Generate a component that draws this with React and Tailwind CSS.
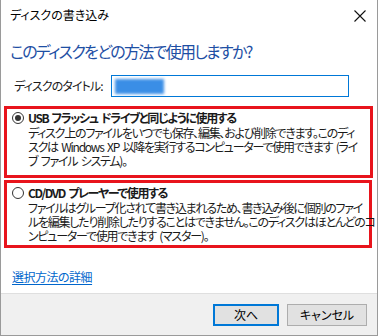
const font = { fontFamily: '"Noto Sans CJK JP", "Noto Sans", sans-serif' };

function Radio({ checked }) {
    return (
        <div className="w-[12px] h-[12px] rounded-full border border-[#333333] bg-white flex items-center justify-center shrink-0">
            {checked && <div className="w-[6px] h-[6px] rounded-full bg-[#333333]" />}
        </div>
    );
}

function Option({ checked, label, lines, height, labelTop }) {
    return (
        <div
            className={`ml-[3px] box-border border-[3px] border-[#e8141c] flex ${height}`}
        >
            <div className={`ml-[5px] ${labelTop}`}>
                <div className="h-[16px] flex items-center">
                    <Radio checked={checked} />
                </div>
            </div>
            <div className={`ml-[4px] ${labelTop} text-[12px] text-[#1a1a1a]`}>
                <div className="leading-[16px] font-bold whitespace-nowrap tracking-[-1.4px] [word-spacing:2px]">{label}</div>
                {lines.map((line) => (
                    <div key={line} className="leading-[14px] whitespace-nowrap tracking-[-1.25px] [word-spacing:2px]">
                        {line}
                    </div>
                ))}
            </div>
        </div>
    );
}

export default function App() {
    return (
        <div
            className="w-[378px] h-[336px] bg-white flex flex-col border-l border-r border-b border-[#9a9a9a] box-border [font-feature-settings:'palt'] overflow-hidden"
            style={font}
        >
            <div className="h-[30px] flex items-start justify-between pl-[9px] pr-[8px] pt-[7px]">
                <span className="text-[12px] leading-[16px] text-black">ディスクの書き込み</span>
                <svg width="12" height="12" viewBox="0 0 12 12" className="mt-[3px] mr-[3px]">
                    <path d="M0.5 0.5 L11.5 11.5 M11.5 0.5 L0.5 11.5" stroke="#111" strokeWidth="1.1" />
                </svg>
            </div>

            <div className="mt-[10px] pl-[9px] text-[16px] leading-[22px] text-[#1e4fa4] whitespace-nowrap tracking-[-1.7px]">
                このディスクをどの方法で使用しますか?
            </div>

            <div className="mt-[13px] flex items-center h-[22px]">
                <span className="pl-[13px] w-[110px] text-[12px] text-[#1a1a1a] leading-[16px] tracking-[-0.9px] whitespace-nowrap">
                    ディスクのタイトル:
                </span>
                <div className="w-[238px] h-[22px] border border-[#0078d7] box-border flex items-center pl-[3px]">
                    <div className="w-[49px] h-[15px] bg-[#3a8ee6] blur-[1.5px]" />
                </div>
            </div>

            <div className="mt-[9px] w-[372px]">
                <Option
                    checked
                    height="h-[72px]"
                    labelTop="pt-[1px]"
                    label="USB フラッシュ ドライブと同じように使用する"
                    lines={[
                        'ディスク上のファイルをいつでも保存、編集、および削除できます。このディ',
                        'スクは Windows XP 以降を実行するコンピューターで使用できます (ライ',
                        'ブ ファイル システム)。',
                    ]}
                />
            </div>
            <div className="mt-[2px] w-[371px]">
                <Option
                    checked={false}
                    height="h-[68px]"
                    labelTop="pt-[2px]"
                    label="CD/DVD プレーヤーで使用する"
                    lines={[
                        'ファイルはグループ化されて書き込まれるため、書き込み後に個別のファイ',
                        'ルを編集したり削除したりすることはできません。このディスクはほとんどのコ',
                        'ンピューターで使用できます (マスター)。',
                    ]}
                />
            </div>

            <div className="mt-[15px] pl-[11px]">
                <span className="text-[12px] leading-[16px] text-[#0066cc] underline underline-offset-2 tracking-[-0.5px]">
                    選択方法の詳細
                </span>
            </div>

            <div className="mt-auto h-[42px] bg-[#f0f0f0] border-t border-[#dfdfdf] flex justify-end items-start pt-[10px] pr-[10px] gap-[8px]">
                <button className="w-[66px] h-[22px] border-2 border-[#0078d7] bg-[#e1e1e1] text-[12px] leading-[16px] text-black flex items-center justify-center">
                    次へ
                </button>
                <button className="w-[80px] h-[22px] border border-[#adadad] bg-[#e1e1e1] text-[12px] leading-[16px] text-black flex items-center justify-center">
                    キャンセル
                </button>
            </div>
        </div>
    );
}
